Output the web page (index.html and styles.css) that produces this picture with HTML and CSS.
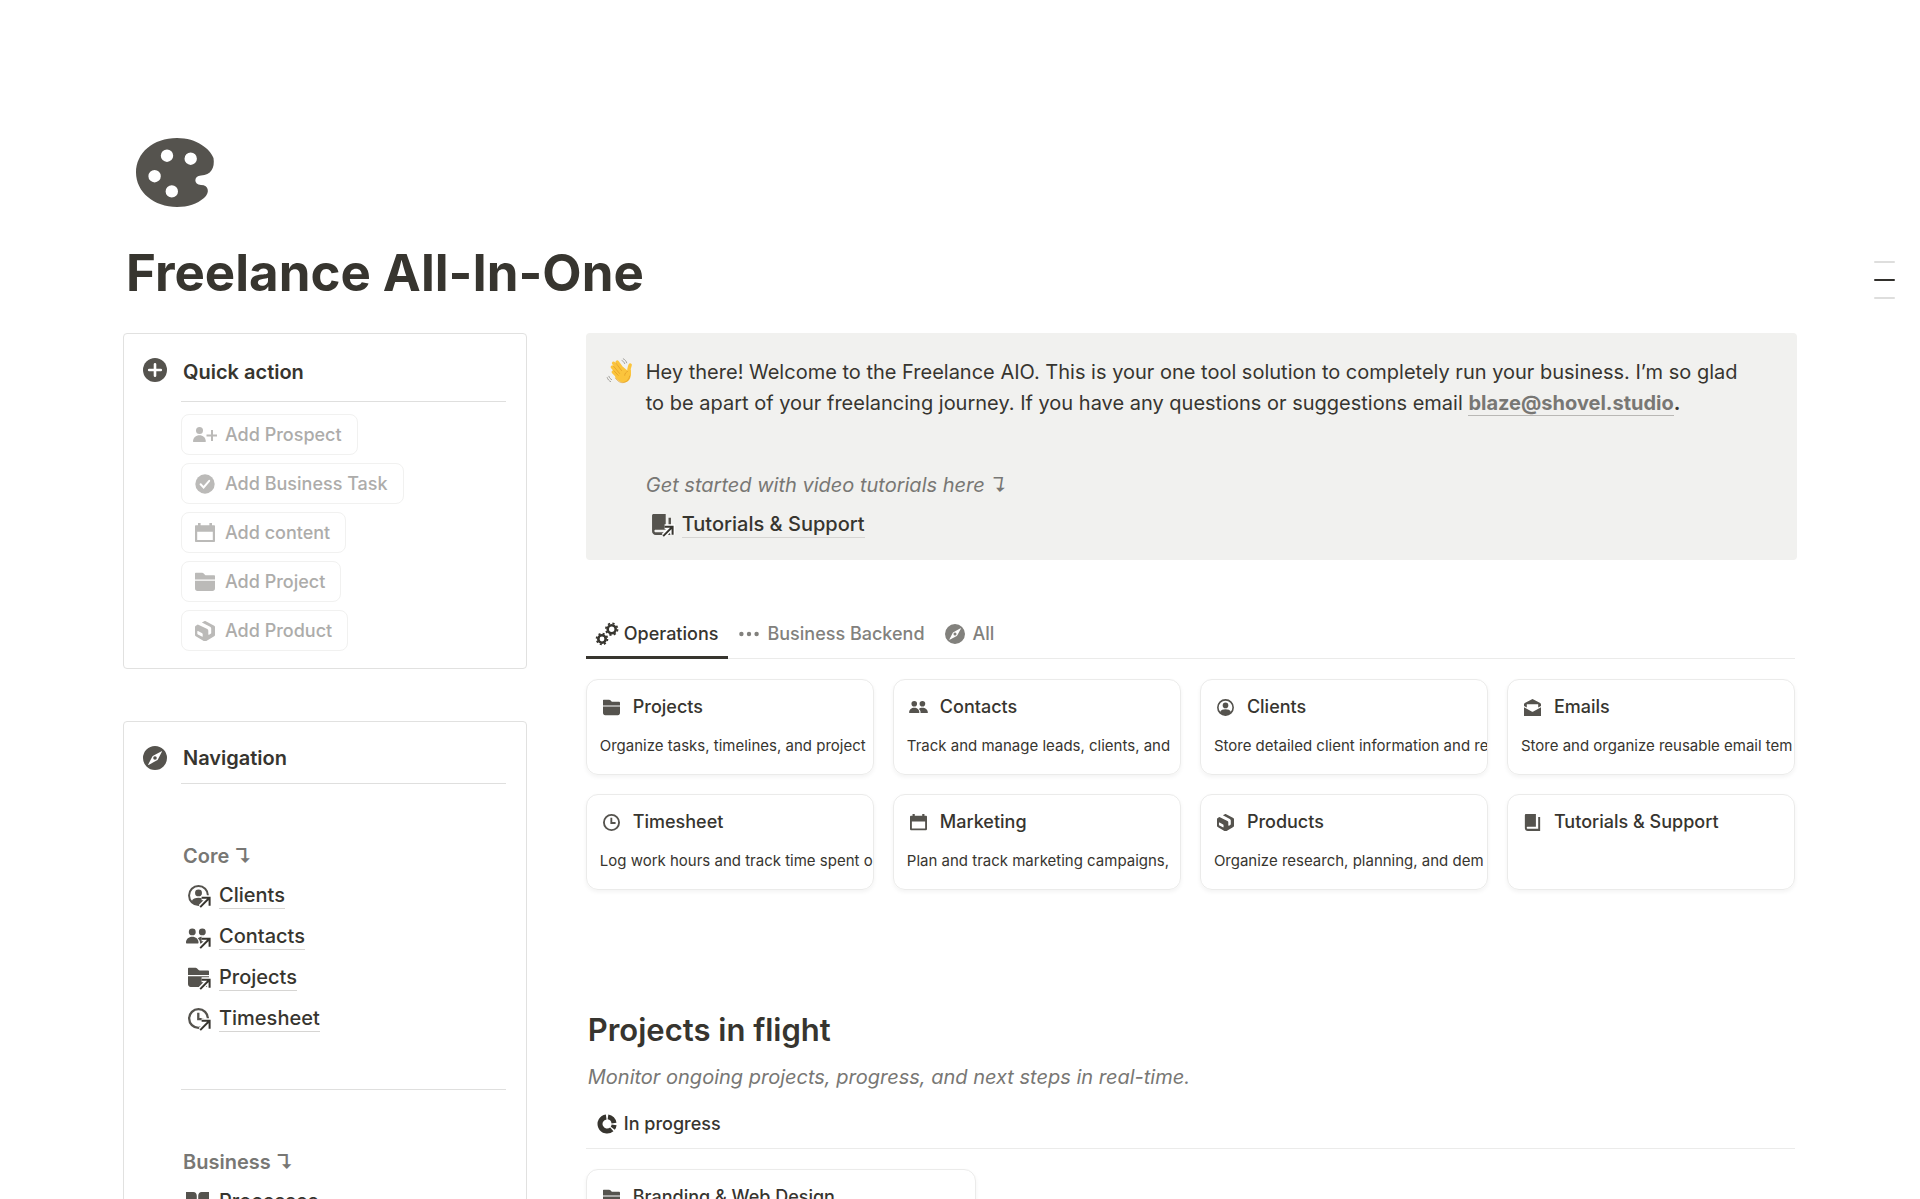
FILE: index.html
```html
<!DOCTYPE html>
<html lang="en">
<head>
<meta charset="utf-8">
<meta name="viewport" content="width=device-width, initial-scale=1">
<title>Freelance All-In-One</title>
<link rel="stylesheet" href="styles.css">
</head>
<body>
<svg class="sprite" aria-hidden="true">
  <symbol id="i-palette" viewBox="0 0 96 96"><path fill-rule="evenodd" d="M50 13C26 13 9 28 9 47.500S27 82 50 82c11 0 20-3 27-9 6-5 5-13-3-13-7.500 0-7.500-9.500 0-9.500C84 50 88 43 86.500 33 83 24 70 13 50 13zM40 24.500a6.200 6.200 0 1 1 0 12.400 6.200 6.200 0 0 1 0-12.400zM63.700 27.500a6.200 6.200 0 1 1 0 12.400 6.200 6.200 0 0 1 0-12.400zM27.600 45a6.200 6.200 0 1 1 0 12.400 6.200 6.200 0 0 1 0-12.400zM44.800 60.200a6.200 6.200 0 1 1 0 12.400 6.200 6.200 0 0 1 0-12.400z"/></symbol>
  <symbol id="i-plus" viewBox="0 0 24 24"><circle cx="12" cy="12" r="12"/><path d="M12 6.200v11.600M6.200 12h11.600" stroke="#fff" stroke-width="2.600" stroke-linecap="round"/></symbol>
  <symbol id="i-compass" viewBox="0 0 24 24"><path fill-rule="evenodd" d="M12 0a12 12 0 1 0 0 24 12 12 0 0 0 0-24zM18.600 5.200c.3-.1.500.1.400.4L15 13.200c-.2.500-.5.800-.9 1.100l-8.500 4.600c-.3.100-.5-.1-.4-.4l4-7.800c.2-.4.500-.7.900-.9zM12 10.200a1.800 1.800 0 1 0 0 3.600 1.800 1.800 0 0 0 0-3.600z"/></symbol>
  <symbol id="i-useradd" viewBox="0 0 24 20"><circle cx="6.500" cy="5.500" r="3.500"/><path d="M0 16.500C0 12.500 3 10.200 6.500 10.200s6.300 2.300 6.300 6.300c0 .3-.2.500-.5.500H.5c-.3 0-.5-.2-.5-.5z"/><path d="M19 5v11M13.500 10.500h10.800" fill="none" stroke="currentColor" stroke-width="2"/></symbol>
  <symbol id="i-check" viewBox="0 0 20 20"><circle cx="10" cy="10" r="9.700"/><path d="M5.600 10.200l3 3.200 5.600-6.600" fill="none" stroke="#fff" stroke-width="2" stroke-linecap="round"/></symbol>
  <symbol id="i-calendar" viewBox="0 0 20 20"><path fill-rule="evenodd" d="M3 0h2.600v2.200h8.800V0H17v2.200h2c.6 0 1 .4 1 1V18c0 .6-.4 1-1 1H1c-.6 0-1-.4-1-1V3.200c0-.6.4-1 1-1h2zM2.200 8.800v8.300h15.600V8.800z"/></symbol>
  <symbol id="i-folder" viewBox="0 0 20 20"><path d="M0 1.500c0-.4.300-.7.700-.7h6.500c.6 0 1 .2 1.500.7l1.400 1.400c.3.300.6.400 1 .4H19c.6 0 1 .4 1 1v3.200H0zM0 8.800h20v7.500c0 1.700-1 2.700-2.600 2.700H2.600C1 19 0 18 0 16.300z"/></symbol>
  <symbol id="i-box" viewBox="0 0 20 20"><path fill-rule="evenodd" d="M2.800 3.400l9.500 4.700c.7.400 1 .9 1 1.600v3.500c0 .5.400.7.800.5l1.500-.9c.4-.2.600-.6.600-1.100V7.600c0-.8-.4-1.400-1.100-1.800L6.900 1.500 9.200.3c.5-.3 1.100-.3 1.600 0l8.400 4.500c.5.300.8.800.8 1.300v7.800c0 .6-.3 1-.8 1.300l-8.400 5.100c-.5.300-1.100.3-1.600 0L.8 15.200c-.5-.3-.8-.7-.8-1.300V6c0-.5.300-1 .8-1.300zM3 10c-.4-.2-.7 0-.7.400v2.100c0 .4.200.7.600.9l4 2.200c.5.300.8.100.8-.4v-2c0-.4-.2-.7-.5-.9z"/></symbol>
  <symbol id="i-client" viewBox="0 0 20 20"><circle cx="10" cy="10" r="9" fill="none" stroke="currentColor" stroke-width="1.900"/><circle cx="10" cy="7.500" r="3.300"/><path d="M3.500 15.500C4.500 13 7 12.200 10 12.200s5.500.8 6.500 3.300C15 17.800 12.500 19 10 19s-5-1.200-6.500-3.500z"/></symbol>
  <symbol id="i-people" viewBox="0 0 22 20"><circle cx="6" cy="5.600" r="3.300"/><circle cx="15.600" cy="5.600" r="3.300"/><path d="M0 16c0-3.600 2.700-5.700 6-5.700s6 2.100 6 5.700c0 .4-.2.600-.6.600H.6c-.4 0-.6-.2-.6-.6zM11.300 11.800c1-.9 2.400-1.500 4.200-1.500 3.500 0 6.500 2.100 6.500 5.700 0 .4-.2.600-.6.600h-8c.3-2-.5-3.600-2.100-4.800z"/></symbol>
  <symbol id="i-clock" viewBox="0 0 20 20"><circle cx="10" cy="10" r="8.900" fill="none" stroke="currentColor" stroke-width="2.200"/><path d="M9.800 4.500v6.100h5" fill="none" stroke="currentColor" stroke-width="2.200"/></symbol>
  <symbol id="i-mail" viewBox="0 0 20 20"><path d="M10 0l8.500 4.400c.9.500 1.500 1 1.500 2v1.700l-3.300 2V6.200H3.300v3.900L0 8.100V6.400c0-1 .6-1.500 1.500-2zM0 9.800l9 5c.7.400 1.300.4 2 0l9-5V20H0z"/></symbol>
  <symbol id="i-book" viewBox="0 0 20 20"><path fill-rule="evenodd" d="M2.500 0H14v15H4.500c-1 0-1.300.6-1.300 1.200s.5 1.200 1.300 1.200h12.200V3.500H19V20H4.500C2.500 20 1 18.500 1 16.500v-15C1 .6 1.600 0 2.500 0z"/></symbol>
  <symbol id="i-openbook" viewBox="0 0 22 20"><path d="M0 1h7c2 0 3.300 1.500 3.300 3.500V19H0zM22 1h-7c-2 0-3.300 1.500-3.300 3.500V19H22z"/></symbol>
  <symbol id="i-gears" viewBox="0 0 24 24"><g fill="none" stroke="currentColor"><circle cx="16.700" cy="7.200" r="4" stroke-width="2.600"/><circle cx="16.700" cy="7.200" r="5.800" stroke-width="1.800" stroke-dasharray="2.200 2.355"/><circle cx="7" cy="17" r="3.700" stroke-width="2.600"/><circle cx="7" cy="17" r="5.400" stroke-width="1.800" stroke-dasharray="2 2.241"/></g></symbol>
  <symbol id="i-dots" viewBox="0 0 20 20"><circle cx="2.400" cy="10" r="2.200"/><circle cx="10" cy="10" r="2.200"/><circle cx="17.600" cy="10" r="2.200"/></symbol>
  <symbol id="i-progress" viewBox="0 0 20 20"><g fill="none" stroke="currentColor" stroke-width="5"><path d="M9.200 2.900a7.100 7.100 0 1 0 5.600 12.400"/><path d="M11 2.900a7.100 7.100 0 0 1 6 6.200"/><path d="M17.100 10.900a7 7 0 0 1-1.300 3.300"/></g></symbol>
  <symbol id="i-out" viewBox="0 0 14 14"><path class="halo" d="M2.500 11.800L11 3.300M3.600 2.800h8v8" fill="none" stroke-width="5"/><path d="M2.200 12.100L11 3.300M3.600 2.800h8v8" fill="none" stroke="currentColor" stroke-width="2"/></symbol>
  <symbol id="i-wave" viewBox="0 0 28 28"><g fill="none" stroke="#fbc43c" stroke-width="3.400" stroke-linecap="round"><path d="M11.200 5l7 9.500M7.600 6.200l8 10M6.300 10l7.500 9M7.300 15l6 6"/><path d="M24.200 8c-1.300 2.500-1.600 5-1 9"/></g><path fill="#fbc43c" d="M12 13.500l5-3.500 4.500 3.500 3.300-.5c.4 3.500.3 6.500-1 9-1.400 2.700-4.200 4-7.300 3.500-3.200-.6-5.500-2.800-7.500-5.500z"/><path fill="none" stroke="#e09a22" stroke-width=".7" stroke-linecap="round" d="M9.800 6l5.700 7.500M7.600 9.300l6 7.200M8 13.800l4.200 4.600M21.500 14.500c-1.800.7-2.700 2-2.800 3.800M9.500 21.200c2.300 3.200 5.200 5 8.300 4.300 3.500-.8 5.300-3.300 5.900-6.500"/><path fill="none" stroke="#8f8d88" stroke-width=".8" stroke-linecap="round" d="M16 3.600c1.300.6 2.200 1.500 2.700 3M17.300 1.800c1.700.8 2.900 2.200 3.400 4M2.900 19.300c.5 1.600 1.400 2.600 2.700 3.300M1.200 20.600c.6 1.900 1.800 3.200 3.400 4"/></symbol>
</svg>

<main class="page">
  <svg class="page-icon" aria-hidden="true"><use href="#i-palette"/></svg>
  <h1>Freelance All-In-One</h1>

  <div class="columns">
    <aside class="side">
      <section class="panel">
        <svg class="panel-icon" aria-hidden="true"><use href="#i-plus"/></svg>
        <div class="panel-body">
          <h2 class="panel-title roomy">Quick action</h2>
          <hr>
          <div class="actions">
            <button type="button" class="action" disabled><svg class="wide" aria-hidden="true"><use href="#i-useradd"/></svg>Add Prospect</button>
            <button type="button" class="action" disabled><svg aria-hidden="true"><use href="#i-check"/></svg>Add Business Task</button>
            <button type="button" class="action" disabled><svg aria-hidden="true"><use href="#i-calendar"/></svg>Add content</button>
            <button type="button" class="action" disabled><svg aria-hidden="true"><use href="#i-folder"/></svg>Add Project</button>
            <button type="button" class="action" disabled><svg aria-hidden="true"><use href="#i-box"/></svg>Add Product</button>
          </div>
        </div>
      </section>

      <section class="panel">
        <svg class="panel-icon" aria-hidden="true"><use href="#i-compass"/></svg>
        <nav class="panel-body" aria-label="Navigation">
          <h2 class="panel-title snug">Navigation</h2>
          <hr>
          <h3 class="group">Core ↴</h3>
          <a class="page-link" href="#clients"><span class="link-icon"><svg aria-hidden="true"><use href="#i-client"/></svg><svg class="out" aria-hidden="true"><use href="#i-out"/></svg></span><span class="link-text">Clients</span></a>
          <a class="page-link" href="#contacts"><span class="link-icon"><svg class="wide" aria-hidden="true"><use href="#i-people"/></svg><svg class="out" aria-hidden="true"><use href="#i-out"/></svg></span><span class="link-text">Contacts</span></a>
          <a class="page-link" href="#projects"><span class="link-icon"><svg aria-hidden="true"><use href="#i-folder"/></svg><svg class="out" aria-hidden="true"><use href="#i-out"/></svg></span><span class="link-text">Projects</span></a>
          <a class="page-link" href="#timesheet"><span class="link-icon"><svg aria-hidden="true"><use href="#i-clock"/></svg><svg class="out" aria-hidden="true"><use href="#i-out"/></svg></span><span class="link-text">Timesheet</span></a>
          <hr class="section-rule">
          <h3 class="group">Business ↴</h3>
          <a class="page-link" href="#processes"><span class="link-icon"><svg class="wide" aria-hidden="true"><use href="#i-openbook"/></svg><svg class="out" aria-hidden="true"><use href="#i-out"/></svg></span><span class="link-text">Processes</span></a>
        </nav>
      </section>
    </aside>

    <div class="content">
      <section class="callout">
        <svg class="callout-icon" role="img" aria-label="Waving hand"><use href="#i-wave"/></svg>
        <div class="callout-body">
          <p>Hey there! Welcome to the Freelance AIO. This is your one tool solution to completely run your business. I’m so glad to be apart of your freelancing journey. If you have any questions or suggestions email <b><a class="email" href="mailto:blaze@shovel.studio">blaze@shovel.studio</a>.</b></p>
          <p class="hint"><em>Get started with video tutorials here ↴</em></p>
          <a class="page-link" href="#tutorials"><span class="link-icon"><svg aria-hidden="true"><use href="#i-book"/></svg><svg class="out" aria-hidden="true"><use href="#i-out"/></svg></span><span class="link-text">Tutorials &amp; Support</span></a>
        </div>
      </section>

      <div class="database">
        <div class="tabs" role="tablist">
          <button type="button" class="tab active" role="tab" aria-selected="true"><svg class="gears" aria-hidden="true"><use href="#i-gears"/></svg>Operations</button>
          <button type="button" class="tab" role="tab" aria-selected="false"><svg aria-hidden="true"><use href="#i-dots"/></svg>Business Backend</button>
          <button type="button" class="tab" role="tab" aria-selected="false"><svg aria-hidden="true"><use href="#i-compass"/></svg>All</button>
        </div>
        <div class="gallery four">
          <a class="card" href="#projects"><span class="card-title"><svg aria-hidden="true"><use href="#i-folder"/></svg>Projects</span><span class="card-text">Organize tasks, timelines, and project</span></a>
          <a class="card" href="#contacts"><span class="card-title"><svg class="wide" aria-hidden="true"><use href="#i-people"/></svg>Contacts</span><span class="card-text">Track and manage leads, clients, and</span></a>
          <a class="card" href="#clients"><span class="card-title"><svg aria-hidden="true"><use href="#i-client"/></svg>Clients</span><span class="card-text">Store detailed client information and re</span></a>
          <a class="card" href="#emails"><span class="card-title"><svg aria-hidden="true"><use href="#i-mail"/></svg>Emails</span><span class="card-text">Store and organize reusable email tem</span></a>
          <a class="card" href="#timesheet"><span class="card-title"><svg aria-hidden="true"><use href="#i-clock"/></svg>Timesheet</span><span class="card-text">Log work hours and track time spent o</span></a>
          <a class="card" href="#marketing"><span class="card-title"><svg aria-hidden="true"><use href="#i-calendar"/></svg>Marketing</span><span class="card-text">Plan and track marketing campaigns,</span></a>
          <a class="card" href="#products"><span class="card-title"><svg aria-hidden="true"><use href="#i-box"/></svg>Products</span><span class="card-text">Organize research, planning, and dem</span></a>
          <a class="card" href="#tutorials"><span class="card-title"><svg aria-hidden="true"><use href="#i-book"/></svg>Tutorials &amp; Support</span></a>
        </div>
      </div>

      <h2 class="section-title">Projects in flight</h2>
      <p class="section-note"><em>Monitor ongoing projects, progress, and next steps in real-time.</em></p>
      <div class="database flush">
        <div class="tabs" role="tablist">
          <button type="button" class="tab single" role="tab" aria-selected="true"><svg aria-hidden="true"><use href="#i-progress"/></svg>In progress</button>
        </div>
        <div class="gallery three">
          <a class="card" href="#branding"><span class="card-title"><svg aria-hidden="true"><use href="#i-folder"/></svg>Branding &amp; Web Design</span></a>
        </div>
      </div>
    </div>
  </div>
</main>

<div class="outline" aria-hidden="true"><i></i><i class="current"></i><i></i></div>
</body>
</html>
```

FILE: styles.css
```css
:root {
  --ink: #37352f;
  --icon: #55534e;
  --muted: #787774;
  --line: #e1e1e0;
  --faint: #ebebea;
}

* { box-sizing: border-box; }

body {
  margin: 0;
  background: #fff;
  color: var(--ink);
  font-family: Inter, "Liberation Sans", sans-serif;
  font-size: 20px;
  line-height: 30px;
}

h1, h2, h3, p { margin: 0; }
a { color: inherit; text-decoration: none; }
button { font: inherit; background: none; border: 0; margin: 0; }
svg { display: block; flex: none; width: 20px; height: 20px; fill: currentColor; overflow: visible; }
.sprite { position: absolute; width: 0; height: 0; }

.page {
  height: 100vh;
  overflow-y: auto;
  scrollbar-width: none;
  padding: 125px 123px 0;
}

.page-icon { width: 96px; height: 96px; margin-left: 4px; color: var(--icon); }

h1 {
  margin: 22px 0 30px 3px;
  font-size: 51px;
  line-height: 60px;
  font-weight: 700;
}

.columns {
  display: grid;
  grid-template-columns: minmax(0, 1fr) minmax(0, 3fr);
  gap: 59px;
  align-items: start;
}

.side { display: flex; flex-direction: column; gap: 52px; }

/* Side panels */
.panel {
  display: flex;
  gap: 14px;
  padding: 20px 20px 17px 19px;
  border: 1px solid var(--line);
  border-radius: 4px;
}
.panel-icon { width: 24px; height: 24px; margin-top: 4px; color: var(--icon); }
.panel-body { flex: 1; min-width: 0; }
.panel-title { padding: 0 2px; font-size: 20px; line-height: 30px; font-weight: 600; }
.panel-title.roomy { padding: 3px 2px 1px; }
.panel-title.snug { padding-top: 1px; margin-bottom: 10px; }

hr { height: 1px; margin: 13px 0 12px; border: 0; background: #dfdfde; }
.snug + hr { margin-top: 10px; }

.actions { display: flex; flex-direction: column; align-items: flex-start; gap: 8px; }
.action {
  display: flex;
  align-items: center;
  gap: 10px;
  height: 41px;
  padding: 0 15px 0 13px;
  border: 1px solid #f1f1f0;
  border-radius: 8px;
  color: #adacaa;
  font-size: 18px;
  font-weight: 500;
}
.action svg { color: #bbbab8; }
.action .wide { width: 24px; margin: 0 -2px; }

.group { padding: 0 2px; margin: 57px 0 9px; font-size: 20px; line-height: 30px; font-weight: 600; color: var(--muted); }
.section-rule { margin: 56px 0; }

.page-link { display: flex; align-items: center; gap: 10px; height: 30px; padding-left: 7px; font-weight: 500; }
.page-link + .page-link { margin-top: 11px; }
.page-link .link-text { line-height: 26px; border-bottom: 1px solid #d6d5d3; margin-bottom: -1px; }
.link-icon { position: relative; color: var(--icon); width: 21px; }
.link-icon svg { width: 21px; height: 21px; }
.link-icon .wide { width: 23px; margin-left: -2px; }
.link-icon .out { position: absolute; right: -3px; bottom: -3px; width: 14px; height: 14px; color: var(--ink); }
.halo { stroke: #fff; }

/* Welcome callout */
.callout {
  display: flex;
  gap: 12px;
  padding: 24px 40px 21px 20px;
  border-radius: 4px;
  background: #f1f1ef;
}
.callout-icon { width: 28px; height: 28px; }
.callout-body { flex: 1; min-width: 0; line-height: 31px; }
.callout .page-link { height: 30px; padding-left: 5px; }
.email { color: var(--muted); border-bottom: 1px solid #b9b8b5; }
.hint { margin: 51px 0 8px; color: var(--muted); }

/* Database views */
.database { margin: 50px 2px 0 0; }
.database.flush { margin-top: 7px; }

.tabs { display: flex; gap: 0; border-bottom: 1px solid var(--faint); }
.tab {
  display: flex;
  align-items: center;
  gap: 8px;
  height: 49px;
  margin-bottom: -1px;
  padding: 2px 9px 0 11px;
  border-bottom: 3px solid transparent;
  color: #82817d;
  font-size: 18px;
  font-weight: 500;
}
.tab.active, .tab.single { color: var(--ink); }
.tab.single { gap: 7px; }
.tab.active { border-bottom-color: var(--ink); padding: 2px 10px 0 9px; gap: 5px; }
.tab .gears { width: 24px; height: 24px; }

.gallery { display: grid; gap: 19px; margin-top: 20px; }
.four { grid-template-columns: repeat(4, minmax(0, 1fr)); }
.three { grid-template-columns: repeat(3, minmax(0, 1fr)); }
.card {
  display: flex;
  flex-direction: column;
  gap: 15px;
  min-height: 96px;
  padding: 15px 0 15px 13px;
  border: 1px solid var(--faint);
  border-radius: 12px;
  box-shadow: 0 2px 4px rgba(15, 15, 15, .05);
  overflow: hidden;
}
.card-title { display: flex; align-items: center; gap: 13px; padding-left: 3px; font-size: 18px; line-height: 24px; font-weight: 500; }
.card-title svg { width: 17px; height: 17px; color: var(--icon); }
.card-title .wide { width: 19px; margin: 0 -1px; }
.card-text { font-size: 15px; line-height: 24px; white-space: nowrap; }

.section-title { margin: 122px 0 14px; padding-left: 2px; font-size: 31px; line-height: 36px; font-weight: 600; }
.section-note { padding-left: 2px; line-height: 31px; color: var(--muted); }

/* Table-of-contents marker floating at the window's right edge */
.outline { position: fixed; top: 261px; right: 25px; display: flex; flex-direction: column; gap: 16px; }
.outline i { width: 21px; height: 2px; border-radius: 2px; background: #dededd; }
.outline .current { background: #32302c; }
```
